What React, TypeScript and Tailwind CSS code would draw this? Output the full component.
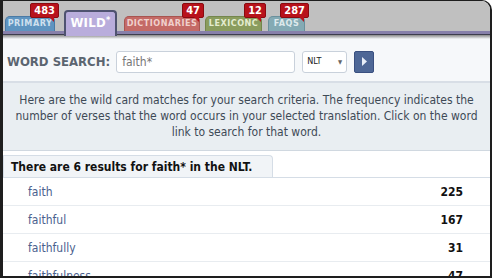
import React from 'react'

const font = { fontFamily: '"DejaVu Sans Condensed", "Liberation Sans", sans-serif' }

function Badge({ n }: { n: string }) {
  return (
    <div className="absolute -top-[14px] right-[-5px] z-20">
      <div className="relative bg-[#b8121b] text-white text-[11px] font-bold leading-[13px] px-[3px] rounded-[2px] border border-[#8a0a10]">{n}</div>
      <div className="absolute right-[5px] -bottom-[4px] w-0 h-0 border-l-[5px] border-l-transparent border-t-[5px] border-t-[#b8121b]" />
    </div>
  )
}

function Tab({ label, bg, border, text, badge, w }: { label: string; bg: string; border: string; text: string; badge?: string; w: string }) {
  return (
    <div className={`relative ${w} h-[15px] ${bg} ${border} border border-b-0 rounded-t-[5px] flex items-center justify-center`}>
      <span className={`text-[9px] font-bold tracking-[0.5px] ${text}`}>{label}</span>
      {badge && <Badge n={badge} />}
    </div>
  )
}

const rows = [
  { w: 'faith', n: 225 },
  { w: 'faithful', n: 167 },
  { w: 'faithfully', n: 31 },
  { w: 'faithfulness', n: 47 },
]

export default function App() {
  return (
    <div className="w-[492px] h-[278px] overflow-hidden bg-white" style={font}>
      <div className="h-full flex flex-col border-l-[3px] border-r-2 border-b-2 border-t border-[#1e1e1e] rounded-tr-[10px] overflow-hidden bg-[#f6f8fa]">
        <div className="h-[30px] bg-[#c0c0c0] flex items-end pl-[2px] shrink-0">
          <Tab label="PRIMARY" w="w-[50px]" bg="bg-[#5f94c0]" border="border-[#4a7aa5]" text="text-[#cfe0ee]" badge="483" />
          <div className="relative z-10 ml-[9px] w-[53px] h-[26px] -mb-[5px] bg-[#b9addc] border-2 border-b-0 border-[#4f5370] rounded-t-[4px] flex items-start justify-center pt-[4px]">
            <span className="text-[13px] font-bold text-white tracking-[0.3px] leading-[14px]">WILD<sup className="text-[9px]">*</sup></span>
          </div>
          <Tab label="DICTIONARIES" w="w-[76px] ml-[7px]" bg="bg-[#c46a66]" border="border-[#a85450]" text="text-[#f0d0cc]" badge="47" />
          <Tab label="LEXICONC" w="w-[57px] ml-[5px]" bg="bg-[#8a9c5e]" border="border-[#74864c]" text="text-[#e4ecd0]" badge="12" />
          <Tab label="FAQS" w="w-[37px] ml-[6px]" bg="bg-[#84aab4]" border="border-[#6a909c]" text="text-[#dde9ec]" badge="287" />
        </div>
        <div className="h-[3px] bg-[#8780aa] shrink-0" />
        <div className="h-[1px] bg-[#3e3e4e] shrink-0" />
        <div className="h-[4px] bg-gradient-to-b from-[#8a8a8a] to-[#f6f8fa] shrink-0" />

        <div className="h-[44px] flex items-center pl-[4px] pt-[3px] shrink-0 border-b-2 border-[#d8dee6]">
          <span className="text-[13px] font-bold text-[#5b6570] mr-[6px]">WORD SEARCH:</span>
          <div className="w-[179px] h-[22px] bg-white border border-[#c9d1db] rounded-[3px] flex items-center px-[5px] text-[12px] text-[#777]">faith*</div>
          <div className="ml-[7px] w-[45px] h-[22px] bg-white border border-[#c9d1db] rounded-[3px] flex items-center justify-between px-[4px]">
            <span className="text-[9px] text-[#222]">NLT</span>
            <span className="text-[6px] text-[#666]">▼</span>
          </div>
          <div className="ml-[7px] w-[20px] h-[22px] bg-[#4e6796] border border-[#3a5080] rounded-[2px] flex items-center justify-center">
            <svg width="7" height="9" viewBox="0 0 7 9"><path d="M1 0 L6 4.5 L1 9 Z" fill="#e8eef8" /></svg>
          </div>
        </div>

        <div className="bg-[#e9eef2] border-b border-[#d0d8e0] px-[6px] pt-[9px] pb-[10px] text-center text-[12px] leading-[16px] text-[#3e4a56] shrink-0">
          Here are the wild card matches for your search criteria. The frequency indicates the number of verses that the word occurs in your selected translation. Click on the word link to search for that word.
        </div>

        <div className="bg-white flex-1 pt-[4px]">
          <div className="border-b border-[#d5dde6]">
            <div className="w-[270px] h-[22px] bg-[#f1f4f7] border border-b-0 border-[#d5dde6] rounded-tr-[4px] flex items-center pl-[7px] text-[12px] font-bold text-[#111]">
              There are 6 results for faith* in the NLT.
            </div>
          </div>
          {rows.map((r) => (
            <div key={r.w} className="h-[28px] flex items-center justify-between pl-[25px] pr-[27px] border-b border-[#e8ecf0]">
              <span className="text-[12px] text-[#4a5f8e]">{r.w}</span>
              <span className="text-[12px] font-bold text-[#111]">{r.n}</span>
            </div>
          ))}
        </div>
      </div>
    </div>
  )
}
